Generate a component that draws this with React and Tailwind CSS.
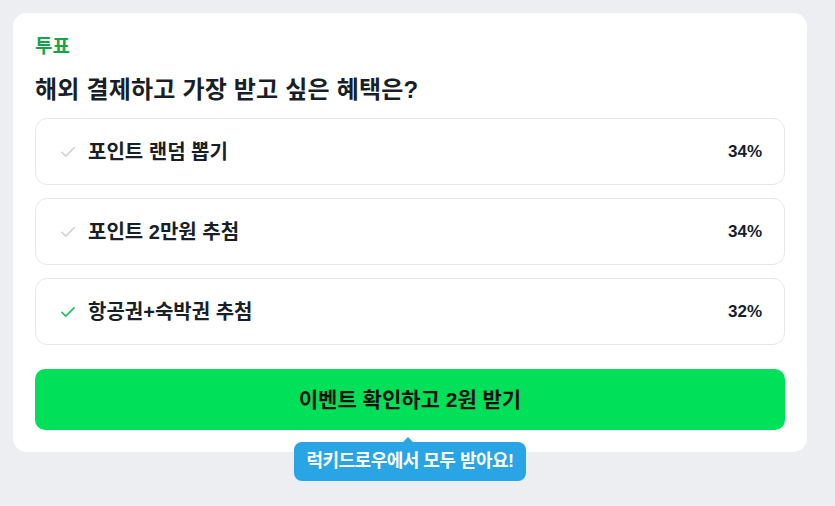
import React from "react";

const options = [
  { label: "포인트 랜덤 뽑기", pct: "34%", picked: false },
  { label: "포인트 2만원 추첨", pct: "34%", picked: false },
  { label: "항공권+숙박권 추첨", pct: "32%", picked: true },
];

function Check({ on }) {
  return (
    <svg width="18" height="18" viewBox="0 0 24 24" fill="none" stroke={on ? "#22c55e" : "#d4d6db"} strokeWidth="2.4" strokeLinecap="round" strokeLinejoin="round">
      <path d="M4 12.5l5 5L20 6.5" />
    </svg>
  );
}

export default function App() {
  return (
    <div
      className="min-h-screen bg-[#edeef2] pt-[13px] pl-[13px]"
      style={{ fontFamily: '"Liberation Sans", "Noto Sans CJK KR", sans-serif' }}
    >
      <div className="w-[794px] bg-white rounded-[14px] px-[22px] pt-[22px] pb-[22px]">
        <div className="text-[19px] font-bold text-[#17a449] leading-[24px]">투표</div>
        <h1 className="mt-[16px] text-[24px] font-bold text-[#191f28] leading-[30px] tracking-[0.2px]">
          해외 결제하고 가장 받고 싶은 혜택은?
        </h1>
        <div className="mt-[13px] flex flex-col gap-[13px]">
          {options.map((o) => (
            <div
              key={o.label}
              className="h-[67px] border border-[#e5e7eb] rounded-[12px] flex items-center pl-[23px] pr-[22px]"
            >
              <Check on={o.picked} />
              <span className="ml-[11px] text-[20px] font-bold text-[#191f28]">{o.label}</span>
              <span className="ml-auto text-[17px] font-bold text-[#191f28]">{o.pct}</span>
            </div>
          ))}
        </div>
        <div className="relative mt-[24px]">
          <button className="w-full h-[61px] rounded-[10px] bg-[#00e059] text-[21px] font-bold text-[#111]">
            이벤트 확인하고 2원 받기
          </button>
          <div className="absolute left-[259px] top-[73px] w-[232px] h-[39px] rounded-[8px] bg-[#29a4e5] flex items-center justify-center text-white text-[18px] font-bold -tracking-[0.5px]">
            <span className="absolute -top-[5px] left-[108px] w-0 h-0 border-l-[6px] border-r-[6px] border-b-[6px] border-l-transparent border-r-transparent border-b-[#29a4e5]" />
            럭키드로우에서 모두 받아요!
          </div>
        </div>
      </div>
    </div>
  );
}
